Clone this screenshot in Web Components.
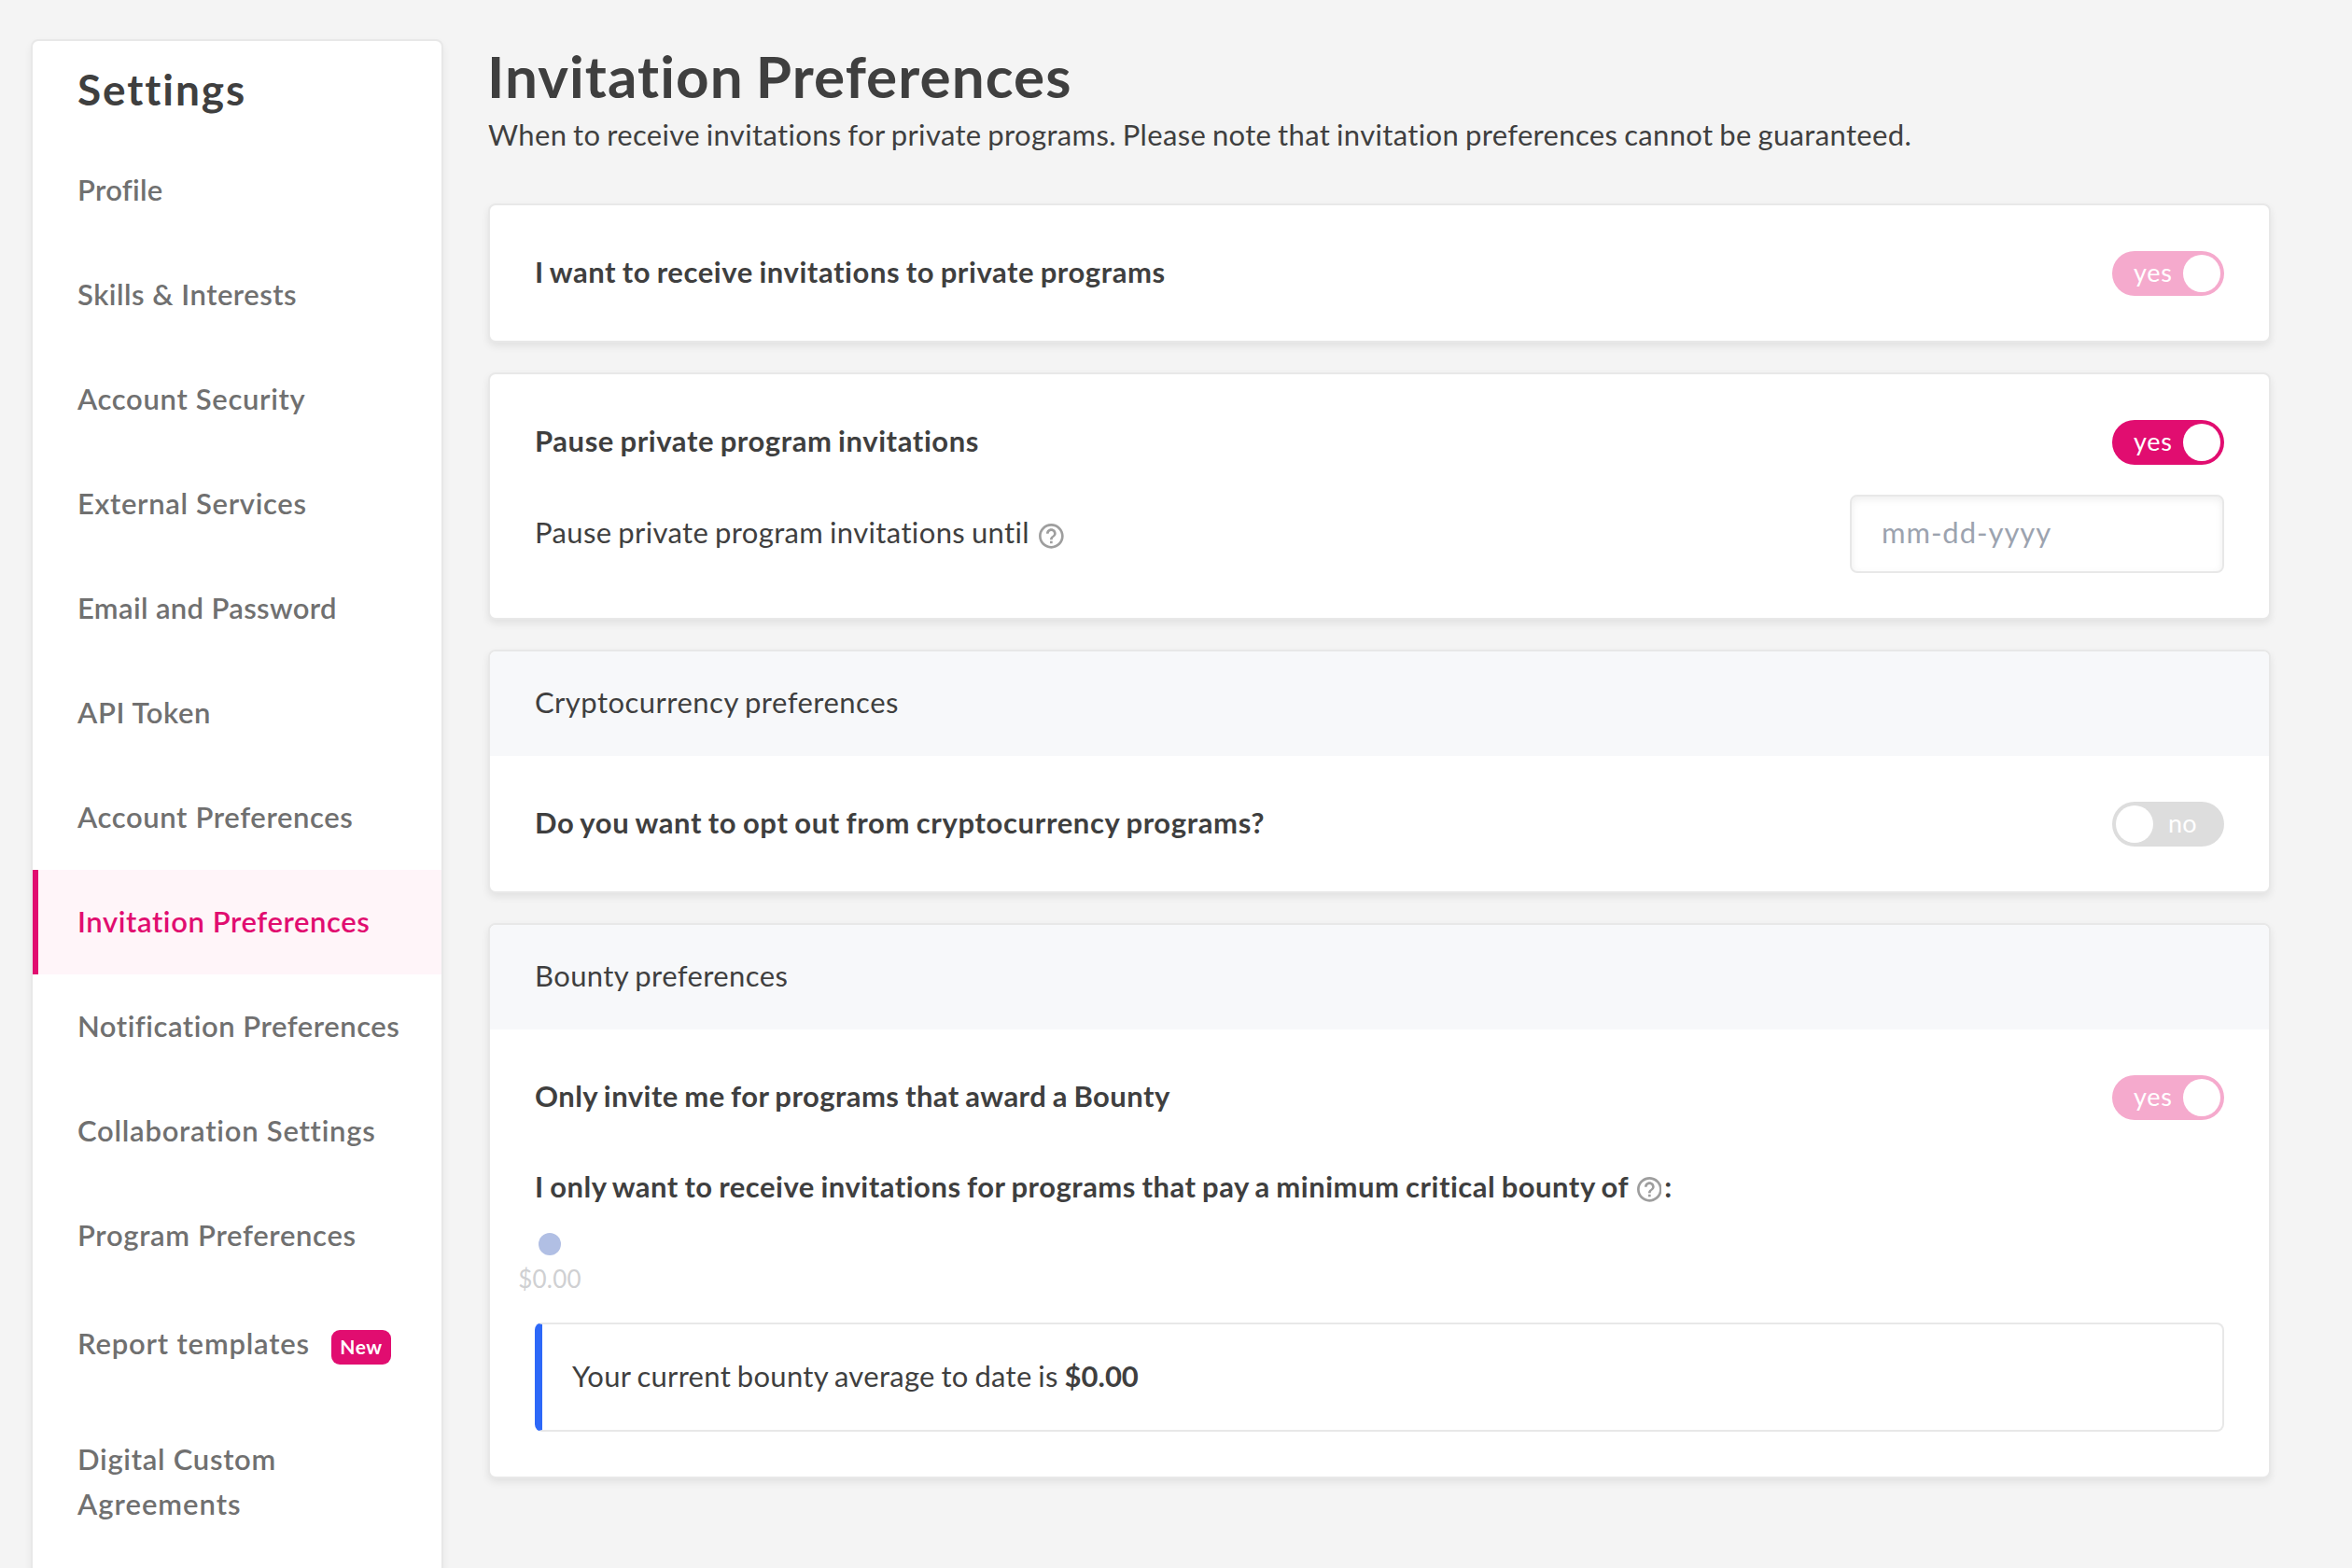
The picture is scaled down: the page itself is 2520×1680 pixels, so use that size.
<!DOCTYPE html>
<html lang="en">
<head>
<meta charset="utf-8">
<title>Invitation Preferences</title>
<style>
  html, body { margin: 0; height: 1680px; overflow: hidden; background: #f4f4f4; }
  body { font: 400 31px/48px Lato, "Noto Sans", sans-serif; color: #3f3f3f; }
</style>
</head>
<body>
<settings-page></settings-page>
<script>
const define = (name, html) => customElements.define(name, class extends HTMLElement {
  connectedCallback() {
    if (this.shadowRoot) return;
    this.attachShadow({ mode: 'open' }).innerHTML = html;
  }
});

// One run of text; tracking is set where it is used.
define('ui-text', `<style>
  :host { display: block; white-space: nowrap; }
  :host([strong]) { font-weight: 700; }
</style><slot></slot>`);

define('nav-item', `<style>
  :host { display: flex; box-sizing: border-box; align-items: flex-start; padding: 31px 0 33px 48px;
    min-height: 112px; color: #707070; font-weight: 600; }
  :host([active]) { color: #e10d70; background: #fff5f9; border-left: 6px solid #e10d70; padding-left: 42px; }
  :host([tall]) { min-height: 127.5px; padding-top: 35px; padding-bottom: 0; }
</style><slot></slot>`);

define('new-badge', `<style>
  :host { display: block; box-sizing: border-box; width: 64px; height: 37px; margin: 10px 0 0 23px; border-radius: 9px;
    background: #e10d70; color: #fff; font: 700 21px/36px Lato, sans-serif; letter-spacing: .5px; text-align: center; }
</style><slot></slot>`);

define('settings-nav', `<style>
  :host { display: block; box-sizing: border-box; width: 442px; height: 1700px; flex: none; border: 2px solid #e8e8e8;
    border-radius: 8px; background: #fff; box-shadow: 0 4px 8px rgba(0,0,0,.06); }
  h2 { margin: 0 0 0 48px; font-size: 46px; line-height: 104px; font-weight: 700; letter-spacing: 1.9px; }
</style>
<h2>Settings</h2>
<nav>
  <nav-item><ui-text style="letter-spacing:.3px">Profile</ui-text></nav-item>
  <nav-item><ui-text style="letter-spacing:.5px">Skills &amp; Interests</ui-text></nav-item>
  <nav-item><ui-text style="letter-spacing:.68px">Account Security</ui-text></nav-item>
  <nav-item><ui-text style="letter-spacing:.67px">External Services</ui-text></nav-item>
  <nav-item><ui-text style="letter-spacing:.36px">Email and Password</ui-text></nav-item>
  <nav-item><ui-text style="letter-spacing:.61px">API Token</ui-text></nav-item>
  <nav-item><ui-text style="letter-spacing:.63px">Account Preferences</ui-text></nav-item>
  <nav-item active><ui-text style="letter-spacing:.6px">Invitation Preferences</ui-text></nav-item>
  <nav-item><ui-text style="letter-spacing:.53px">Notification Preferences</ui-text></nav-item>
  <nav-item><ui-text style="letter-spacing:.76px">Collaboration Settings</ui-text></nav-item>
  <nav-item><ui-text style="letter-spacing:.68px">Program Preferences</ui-text></nav-item>
  <nav-item tall><ui-text style="letter-spacing:.82px">Report templates</ui-text><new-badge>New</new-badge></nav-item>
  <nav-item><ui-text style="letter-spacing:.71px">Digital Custom<br><span style="letter-spacing:1px">Agreements</span></ui-text></nav-item>
</nav>`);

define('help-icon', `<style>
  :host { display: block; width: 26.7px; height: 26.7px; flex: none; color: #9e9e9e; }
  svg { display: block; width: 100%; height: 100%; }
</style>
<svg viewBox="2 2 20 20" fill="currentColor"><path d="M11 18h2v-2h-2v2zm1-16C6.48 2 2 6.48 2 12s4.48 10 10 10 10-4.48 10-10S17.52 2 12 2zm0 18c-4.41 0-8-3.59-8-8s3.59-8 8-8 8 3.59 8 8-3.59 8-8 8zm0-14c-2.21 0-4 1.79-4 4h2c0-1.1.9-2 2-2s2 .9 2 2c0 2-3 1.75-3 5h2c0-2.25 3-2.5 3-5 0-2.21-1.79-4-4-4z"/></svg>`);

define('toggle-switch', `<style>
  :host { display: flex; box-sizing: border-box; width: 120px; height: 48px; flex: none; align-items: center;
    justify-content: space-between; padding: 4px 4px 4px 23px; border-radius: 24px; background: #e10d70; color: #fff;
    font-size: 27px; line-height: 37px; letter-spacing: .7px; }
  :host([disabled]) { background: #f5aacd; }
  :host([off]) { flex-direction: row-reverse; justify-content: flex-end; background: #ddd; padding: 4px; gap: 16px; letter-spacing: .1px; }
  i { width: 40px; height: 40px; border-radius: 50%; background: #fff; }
  span { height: 40px; }
</style><span><slot></slot></span><i></i>`);

define('date-field', `<style>
  :host { display: flex; box-sizing: border-box; align-items: center; width: 401px; height: 84px; padding: 0 0 4px 32px;
    border: 2px solid #e8e8e8; border-radius: 8px; background: #fff; box-shadow: inset 0 3px 8px rgba(0,0,0,.07);
    color: #9ca3af; letter-spacing: .95px; }
</style><slot></slot>`);

define('pref-row', `<style>
  :host { display: flex; justify-content: space-between; align-items: flex-end; height: 49px; }
  div { align-self: flex-start; line-height: 46px; }
</style><div><slot></slot></div><slot name="control"></slot>`);

define('pref-card', `<style>
  :host { display: block; border: 2px solid #e8e8e8; border-radius: 8px; background: #fff;
    box-shadow: 0 4px 8px rgba(0,0,0,.08); }
  header { display: none; align-items: center; box-sizing: border-box; height: 112px; padding: 0 48px 4px;
    background: #f7f8fa; border-radius: 6px 6px 0 0; }
  :host([titled]) header { display: flex; }
  section { padding: 48px; }
</style><header><slot name="title"></slot></header><section><slot></slot></section>`);

define('bounty-slider', `<style>
  :host { display: flex; flex-direction: column; align-items: center; width: 70px; margin: 26px 0 31px -19px; }
  i { width: 24px; height: 24px; border-radius: 50%; background: #b1bfe4; }
  span { margin-top: 9px; height: 32px; font-size: 26px; line-height: 32px; color: #cfd0d2; letter-spacing: .2px; }
</style><i></i><span><slot></slot></span>`);

define('info-note', `<style>
  :host { display: flex; align-items: center; box-sizing: border-box; height: 117px; padding: 0 0 3px 32px;
    border: 2px solid #e8e8e8; border-left: 8px solid #2d68f8; border-radius: 8px; }
</style><slot></slot>`);

define('settings-page', `<style>
  :host { display: flex; gap: 48px; padding: 42px 0 0 33px; box-sizing: border-box; height: 1680px; overflow: hidden; }
  main { width: 1910px; flex: none; word-spacing: -1.5px; }
  h1 { margin: 0 0 0 -1px; font-size: 62px; line-height: 78px; font-weight: 700; letter-spacing: 1.05px; word-spacing: -3px; }
  .cards { display: flex; flex-direction: column; gap: 32px; margin-top: 50px; }
  .line { display: flex; align-items: center; }
  .until { height: 84px; margin-top: 32px; justify-content: space-between; }
  .until .line ui-text { padding-bottom: 4px; }
  .until help-icon { margin: 5.6px 0 0 10.2px; }
  .minimum { height: 48px; margin-top: 47px; }
  .minimum help-icon { margin: 7.6px 3px 0 8.5px; }
</style>
<settings-nav></settings-nav>
<main>
  <h1>Invitation Preferences</h1>
  <ui-text style="letter-spacing:.35px">When to receive invitations for private programs. Please note that invitation preferences cannot be guaranteed.</ui-text>
  <div class="cards">
    <pref-card>
      <pref-row><ui-text strong style="letter-spacing:.56px">I want to receive invitations to private programs</ui-text>
        <toggle-switch slot="control" disabled>yes</toggle-switch></pref-row>
    </pref-card>
    <pref-card>
      <pref-row><ui-text strong style="letter-spacing:.57px">Pause private program invitations</ui-text>
        <toggle-switch slot="control">yes</toggle-switch></pref-row>
      <div class="line until">
        <div class="line"><ui-text style="letter-spacing:.37px">Pause private program invitations until</ui-text><help-icon></help-icon></div>
        <date-field>mm-dd-yyyy</date-field>
      </div>
    </pref-card>
    <pref-card titled>
      <ui-text slot="title" style="letter-spacing:.48px">Cryptocurrency preferences</ui-text>
      <pref-row><ui-text strong style="letter-spacing:.63px">Do you want to opt out from cryptocurrency programs?</ui-text>
        <toggle-switch slot="control" off>no</toggle-switch></pref-row>
    </pref-card>
    <pref-card titled>
      <ui-text slot="title" style="letter-spacing:.4px">Bounty preferences</ui-text>
      <pref-row><ui-text strong style="letter-spacing:.45px">Only invite me for programs that award a Bounty</ui-text>
        <toggle-switch slot="control" disabled>yes</toggle-switch></pref-row>
      <div class="line minimum"><ui-text strong style="letter-spacing:.5px">I only want to receive invitations for programs that pay a minimum critical bounty of</ui-text><help-icon></help-icon><ui-text strong>:</ui-text></div>
      <bounty-slider>$0.00</bounty-slider>
      <info-note><ui-text style="letter-spacing:.3px">Your current bounty average to date is <b style="letter-spacing:0">$0.00</b></ui-text></info-note>
    </pref-card>
  </div>
</main>`);
</script>
</body>
</html>
